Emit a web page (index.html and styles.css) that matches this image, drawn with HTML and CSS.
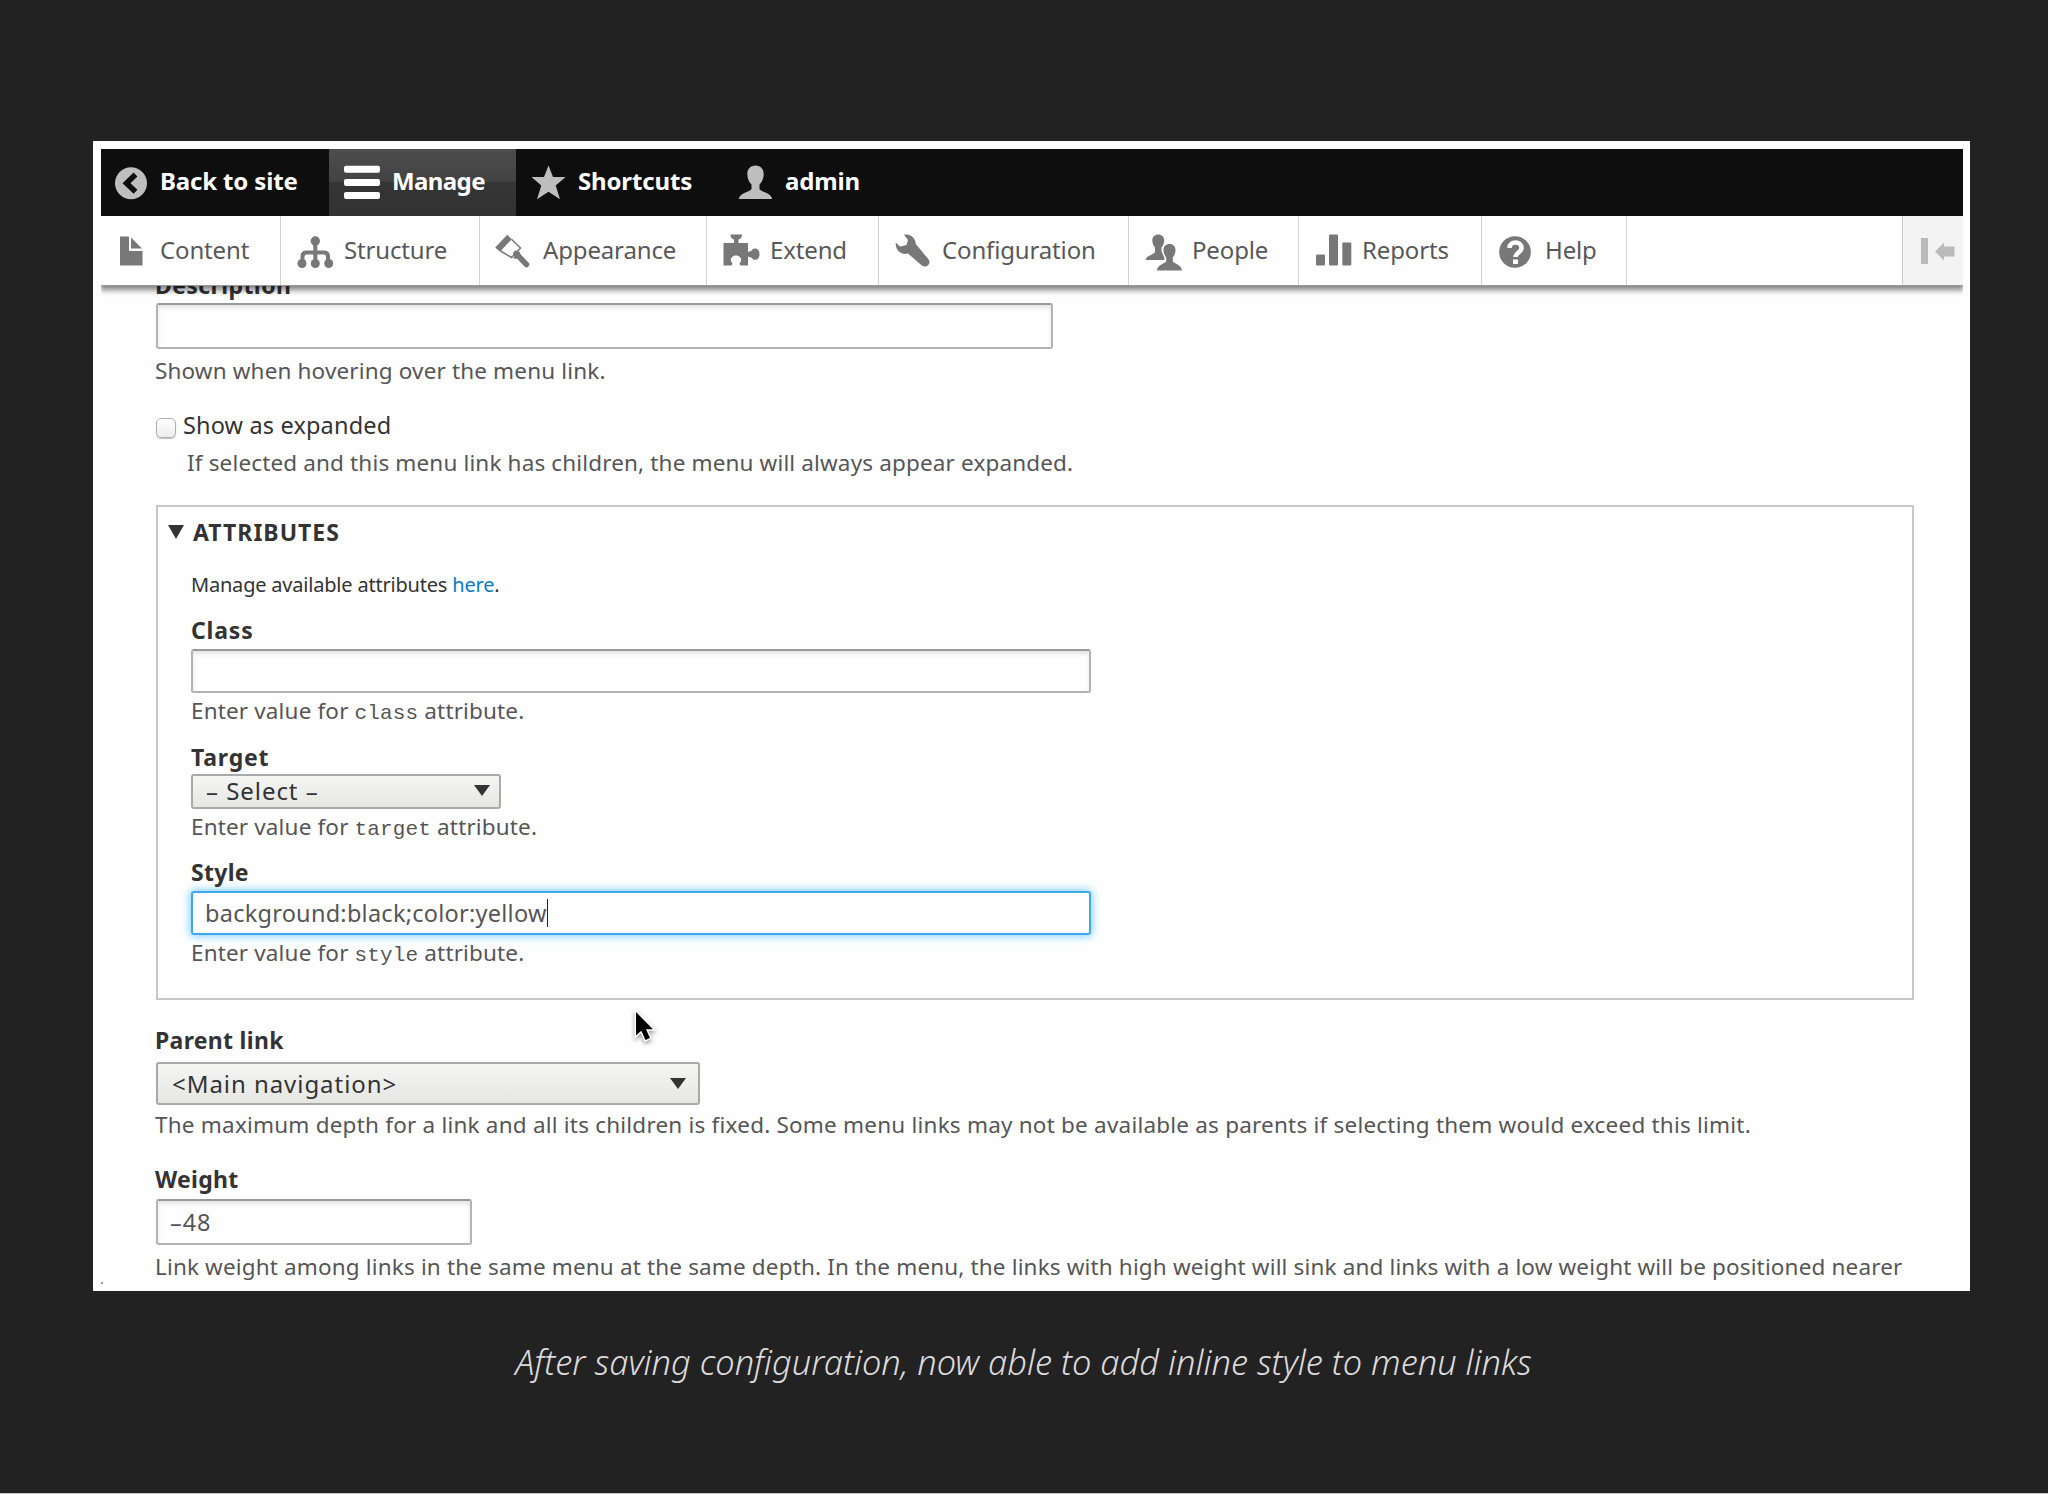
FILE: index.html
```html
<!DOCTYPE html>
<html lang="en">
<head>
<meta charset="UTF-8">
<meta name="viewport" content="width=device-width, initial-scale=1.0">
<title>Edit menu link</title>
<link rel="stylesheet" href="styles.css">
</head>
<body>
<figure class="slide">
  <div class="screen">
    <!-- Admin toolbar -->
    <nav class="toolbar-bar">
      <a class="bar-item first">
        <svg class="icon" viewBox="0 0 36 36"><circle cx="18" cy="18.3" r="16"/><path d="M22.5 9.5L13.5 18.2l9 8.6" fill="none" stroke="#0e0e0e" stroke-width="5.5"/></svg>
        <span>Back to site</span>
      </a>
      <a class="bar-item active">
        <svg class="icon" viewBox="0 0 36 36"><rect x="0" y="0.7" width="36" height="7" rx="2"/><rect x="0" y="14" width="36" height="7" rx="2"/><rect x="0" y="27" width="36" height="7" rx="2"/></svg>
        <span>Manage</span>
      </a>
      <a class="bar-item">
        <svg class="icon" viewBox="0 0 36 36"><path d="M17.5 0.5L22 12h12.5l-9.8 8.4 4.3 13.9-11.5-7.6L6 34.3l4.3-13.9L0.5 12H13z"/></svg>
        <span>Shortcuts</span>
      </a>
      <a class="bar-item">
        <svg class="icon" viewBox="0 0 36 36"><path d="M17.5 0.5c5 0 8.2 3.5 8.2 8.5 0 4.5-1.7 8-4.2 10.5v4.5c1.5 3 11.5 3.5 12.7 10H0.8c1.2-6.5 11.2-7 12.7-10v-4.500C11 17 9.300 13.500 9.300 9c0-5 3.200-8.500 8.200-8.500z"/></svg>
        <span>admin</span>
      </a>
    </nav>
    <nav class="toolbar-tray">
      <a class="tray-item first">
        <svg class="icon" viewBox="0 0 36 36"><path d="M7 3.500h9v14.500h13.500v14.500H7z"/><path d="M18 4.500L29 15.500H18z"/></svg>
        <span>Content</span>
      </a>
      <a class="tray-item">
        <svg class="icon" viewBox="0 0 36 36"><circle cx="18.300" cy="8" r="4.700"/><circle cx="5" cy="30.500" r="4.500"/><circle cx="18.300" cy="30.500" r="4.500"/><circle cx="31.700" cy="30.500" r="4.500"/><path d="M18.300 8v22M5.500 30v-6.500q0-4 4-4h17.500q4 0 4 4v6.500" fill="none" stroke="#787878" stroke-width="4"/></svg>
        <span>Structure</span>
      </a>
      <a class="tray-item">
        <svg class="icon" viewBox="0 0 36 36"><path d="M-0.800 14.500L11.200 1.700l4.600 4.500L4 18.800z"/><path d="M15.500 6.300l9 8.700-9 9.500L4.500 18" fill="none" stroke="#787878" stroke-width="1.500"/><path d="M20 20.500l10.500 11" stroke="#787878" stroke-width="5.500" stroke-linecap="round"/><path d="M17 25l6-7 2 4-5 4z"/></svg>
        <span>Appearance</span>
      </a>
      <a class="tray-item">
        <svg class="icon" viewBox="0 0 36 36"><path d="M0.500 10h10.500v-3.500c-2.500-1-3.500-2-3.500-5h11.500c0 3-1 4-3.500 5V10H25v9l4-1.500c1-3 7.500-3 7.500 3.700s-6.500 6.700-7.500 3.700L25 23.500v9h-7.500c-1-1.500-1.500-2 0-3.500 2-3-1-6.500-4.500-6.500s-6.500 3.500-4.500 6.500c1.500 1.500 1 2 0 3.500h-8z"/></svg>
        <span>Extend</span>
      </a>
      <a class="tray-item">
        <svg class="icon" viewBox="0 0 36 36"><path d="M9 1.800c6-1.500 11.500 3 11.800 9.200l12.800 15.500c3 4-2.500 9.500-6.800 6L13 20.500C6 22.500 0 17 0.800 9.500L5 13.500l6.500-1.500L13 7z"/></svg>
        <span>Configuration</span>
      </a>
      <a class="tray-item">
        <svg class="icon" viewBox="0 0 36 36"><path d="M13.200 1.500c3.800 0 6 2.500 6 6 0 3-1.200 5-2.700 7v4l3 3v5.500H0.800c0-4.500 7.700-5 9.200-8v-4.500c-1.500-2-2.700-4-2.700-7 0-3.500 2.200-6 5.900-6z"/><path stroke="#fff" stroke-width="3" paint-order="stroke" d="M24.500 11c3.800 0 6 2.500 6 6 0 3-1.200 5.500-2.700 7.500v4c1.500 2.500 9 3 9 9H12c0-6 7.700-6.500 9.200-9v-4c-1.500-2-2.700-4.500-2.700-7.500 0-3.500 2.200-6 6-6z"/></svg>
        <span>People</span>
      </a>
      <a class="tray-item">
        <svg class="icon" viewBox="0 0 36 36"><rect x="1" y="21.500" width="9" height="11" rx="1"/><rect x="14" y="1.500" width="9" height="31" rx="1"/><rect x="27.300" y="9.500" width="9" height="23" rx="1"/></svg>
        <span>Reports</span>
      </a>
      <a class="tray-item">
        <svg class="icon" viewBox="0 0 36 36"><circle cx="17" cy="19" r="15.800"/><path d="M11.500 15c0-7.500 12-7.500 12 0 0 4.500-6 4.500-6 9" fill="none" stroke="#fff" stroke-width="4.500"/><rect x="15" y="26.500" width="5" height="4.500" fill="#fff"/></svg>
        <span>Help</span>
      </a>
      <a class="tray-toggle">
        <svg class="toggle-icon" viewBox="0 0 36 28" fill="#bababa"><rect x="0" y="1" width="7" height="26"/><path d="M14 14.500l9-9v4h10.500v10H23v4z"/></svg>
      </a>
    </nav>

    <!-- Menu link form -->
    <form class="link-form">
      <div class="form-item">
        <label class="label clipped">Description</label>
        <div class="text-input tall"></div>
        <p class="help">Shown when hovering over the menu link.</p>
      </div>

      <div class="form-item expanded">
        <div class="check-row"><i class="checkbox"></i><span>Show as expanded</span></div>
        <p class="help">If selected and this menu link has children, the menu will always appear expanded.</p>
      </div>

      <section class="details">
        <h3 class="summary"><i class="triangle"></i>ATTRIBUTES</h3>
        <p class="intro">Manage available attributes <a class="link">here</a>.</p>
        <div class="form-item class-item">
          <label class="label">Class</label>
          <div class="text-input"></div>
          <p class="help">Enter value for <code>class</code> attribute.</p>
        </div>
        <div class="form-item target-item">
          <label class="label">Target</label>
          <div class="select small"><span>– Select –</span><i class="triangle"></i></div>
          <p class="help">Enter value for <code>target</code> attribute.</p>
        </div>
        <div class="form-item style-item">
          <label class="label">Style</label>
          <div class="text-input focus"><span>background:black;color:yellow</span><i class="caret"></i></div>
          <p class="help">Enter value for <code>style</code> attribute.</p>
        </div>
      </section>

      <div class="form-item parent-item">
        <label class="label">Parent link</label>
        <div class="select"><span>&lt;Main navigation&gt;</span><i class="triangle"></i></div>
        <p class="help long">The maximum depth for a link and all its children is fixed. Some menu links may not be available as parents if selecting them would exceed this limit.</p>
      </div>

      <div class="form-item weight-item">
        <label class="label">Weight</label>
        <div class="text-input tall number"><span>–48</span></div>
        <p class="help">Link weight among links in the same menu at the same depth. In the menu, the links with high weight will sink and links with a low weight will be positioned nearer</p>
      </div>
    </form>

    <svg class="cursor" viewBox="0 0 26 36"><path d="M3 2v23.500l5.300-4.800 4.200 9.300 4.500-2-4-8.800h7z" fill="#000" stroke="#fff" stroke-width="3" paint-order="stroke"/></svg>
    <i class="speck"></i>
  </div>
  <figcaption class="caption">After saving configuration, now able to add inline style to menu links</figcaption>
</figure>
</body>
</html>
```
FILE: styles.css
```css
:root {
  --text: #333;
  --muted: #565656;
  --icon: #787878;
}

* {
  box-sizing: border-box;
}

body {
  margin: 0;
  height: 1494px;
  overflow: hidden;
  background: #232223;
  border-bottom: 1px solid #c9c6c9;
  font-family: "Noto Sans", "Open Sans", sans-serif;
  font-size: 22px;
  color: var(--text);
}

p, h3 {
  margin: 0;
}

.slide {
  margin: 0;
  padding: 141px 0 0 93px;
}

.screen {
  position: relative;
  width: 1877px;
  height: 1150px;
  padding: 8px 7px 0 8px;
  background: #fefefe;
  overflow: hidden;
}

/* Toolbar */
.toolbar-bar {
  display: grid;
  grid-template-columns: 228px 187px 207px auto;
  height: 67px;
  background: #0e0e0e;
}

.bar-item, .tray-item {
  display: flex;
  align-items: center;
  gap: 11px;
  white-space: nowrap;
  font-size: 24px;
}

.icon {
  width: 36px;
  height: 36px;
  flex: none;
  overflow: visible;
  fill: var(--icon);
}

.bar-item {
  padding-left: 15px;
  color: #fff;
  font-weight: 700;
  letter-spacing: -0.15px;
}

.bar-item .icon {
  fill: #bebebe;
}

.bar-item span {
  padding-bottom: 5px;
}

.bar-item.active {
  gap: 12px;
  letter-spacing: -0.6px;
  background: linear-gradient(#4d4d4d, #424242 50%, #353535 50%, #323232);
}

.bar-item.active .icon {
  fill: #fff;
}

.toolbar-tray {
  position: relative;
  z-index: 1;
  display: grid;
  grid-template-columns: 180px 199px 227px 172px 250px 170px 183px 145px 1fr;
  height: 70px;
  background: #fefefe;
  border-bottom: 1px solid #999;
  box-shadow: 0 3px 6px 1px rgba(0, 0, 0, 0.5);
  clip-path: inset(0 0 -12px 0);
}

.tray-item {
  padding-left: 16px;
  color: #585858;
  letter-spacing: -0.15px;
  border-right: 1px solid #d2d2d2;
}

.tray-item span {
  padding-bottom: 3px;
}

.bar-item.first, .tray-item.first {
  padding-left: 12px;
}

.tray-toggle {
  display: flex;
  align-items: center;
  justify-self: end;
  width: 61px;
  padding-left: 18px;
  background: #f3f3f3;
  border-left: 1px solid #ccc;
}

.toggle-icon {
  width: 36px;
  height: 28px;
}

/* Form */
.link-form {
  margin-top: -17px;
  padding-left: 55px;
}

.label {
  display: block;
  margin-left: -1px;
  padding-bottom: 2px;
  line-height: 26px;
  font-size: 23px;
  font-weight: 700;
  letter-spacing: 0.3px;
}

/* scrolled under the tray */
.label.clipped {
  margin-bottom: -4px;
  padding: 0;
  line-height: 32px;
  letter-spacing: 0.4px;
}

.help {
  margin: 4px 0 0 -1px;
  padding-bottom: 1px;
  line-height: 27px;
  font-size: 22.5px;
  letter-spacing: 0.15px;
  color: var(--muted);
  white-space: nowrap;
}

.help.long {
  letter-spacing: 0.21px;
}

code {
  font-family: "Liberation Mono", monospace;
  font-size: 21px;
  line-height: 0;
}

.text-input {
  display: flex;
  align-items: center;
  width: 899px;
  height: 44px;
  margin-top: 4px;
  padding: 0 12px 1px;
  border: 2px solid #b3b3b3;
  border-top-color: #999;
  border-radius: 3px;
  background: #fefefe;
  box-shadow: inset 0 3px 4px rgba(0, 0, 0, 0.1);
  font-size: 23.5px;
  letter-spacing: 0.25px;
  color: var(--muted);
}

.text-input.tall {
  width: 897px;
  height: 46px;
  margin-top: 6px;
}

.text-input.tall + .help {
  margin-top: 8px;
}

.text-input.focus {
  border-color: #40a9ec;
  box-shadow: 0 0 9px 1px rgba(64, 182, 255, 0.7);
}

.caret {
  width: 1px;
  height: 28px;
  background: #222;
}

.expanded {
  margin-top: 25px;
}

.expanded .help {
  margin: 9px 0 0 31px;
}

.check-row {
  display: flex;
  align-items: center;
  gap: 7px;
  height: 30px;
  font-size: 23.5px;
  letter-spacing: 0.15px;
}

.checkbox {
  width: 20px;
  height: 20px;
  margin-top: 6px;
  border: 1.5px solid #b0b0b0;
  border-radius: 5px;
  background: linear-gradient(#fff, #ececec);
  box-shadow: 0 1px 1px rgba(0, 0, 0, 0.25);
}

.details {
  width: 1758px;
  height: 495px;
  margin-top: 28px;
  padding: 10px 0 0 33px;
  border: 2px solid #c8c8c8;
}

.details .label, .details .help {
  margin-left: 0;
}

.details .text-input {
  width: 900px;
}

.summary {
  display: flex;
  align-items: center;
  gap: 9px;
  margin-left: -23px;
  line-height: 30px;
  font-size: 23px;
  letter-spacing: 1px;
}

.triangle {
  flex: none;
  border: 8px solid transparent;
  border-top: 14px solid #333;
  border-bottom: 0;
}

.intro {
  margin-top: 24px;
  font-size: 20px;
  line-height: 28px;
  letter-spacing: -0.2px;
}

.link {
  color: #0b7bc4;
}

.class-item {
  margin-top: 18px;
}

.class-item .label, .target-item .label {
  letter-spacing: 0.8px;
}

.target-item {
  margin-top: 19px;
}

.style-item {
  margin-top: 18px;
}

.select {
  display: flex;
  align-items: center;
  justify-content: space-between;
  width: 544px;
  height: 43px;
  margin-top: 7px;
  padding: 0 12px 1px 14px;
  border: 2px solid #a9a9a9;
  border-radius: 3px;
  background: linear-gradient(#f5f5f4, #e6e6e3);
  font-size: 24px;
  letter-spacing: 0.95px;
}

.select .triangle {
  border-top-width: 11px;
}

.select + .help {
  margin-top: 6px;
}

.select.small {
  width: 310px;
  height: 35px;
  margin-top: 2px;
  padding: 0 9px 2px 13px;
}

.select.small + .help {
  margin-top: 4px;
}

.parent-item {
  margin-top: 27px;
}

.weight-item {
  margin-top: 27px;
}

.text-input.number {
  width: 316px;
  margin-top: 5px;
  letter-spacing: 0.9px;
}

/* Mouse pointer over the page */
.cursor {
  position: absolute;
  left: 540px;
  top: 869px;
  width: 26px;
  height: 36px;
  filter: drop-shadow(0 2px 2px rgba(0, 0, 0, 0.4));
}

.speck {
  position: absolute;
  left: 8px;
  top: 1141px;
  width: 2px;
  height: 2px;
  background: #999;
}

.caption {
  width: 1861px;
  padding-top: 45px;
  text-align: center;
  font-size: 34.4px;
  font-style: italic;
  font-weight: 300;
  line-height: 52px;
  color: #dcdadc;
}
```
